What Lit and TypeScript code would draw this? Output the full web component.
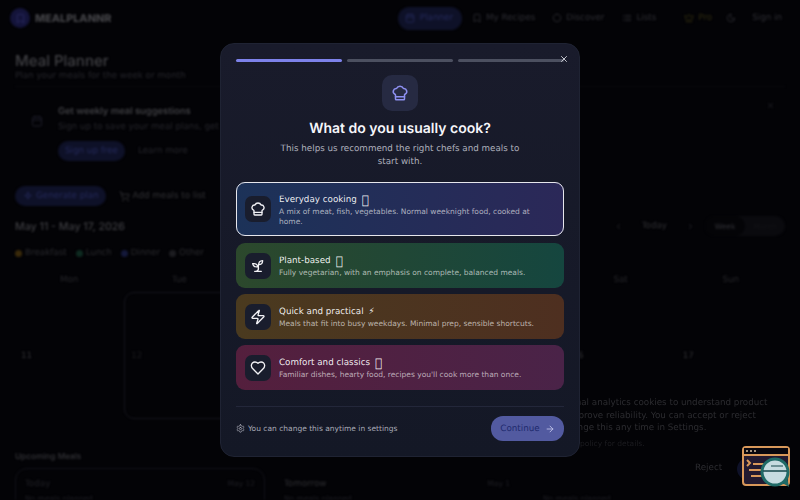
import { LitElement, html, css, svg } from "lit";
import { customElement } from "lit/decorators.js";

const P: Record<string, string[]> = {
  chef: ["M17 21a1 1 0 0 0 1-1v-5.35c0-.457.316-.844.727-1.041a4 4 0 0 0-2.134-7.589 5 5 0 0 0-9.186 0 4 4 0 0 0-2.134 7.588c.411.198.727.585.727 1.041V20a1 1 0 0 0 1 1Z", "M6 17h12"],
  sprout: ["M7 20h10", "M10 20c5.5-2.5.8-6.4 3-10", "M9.5 9.4c1.1.8 1.8 2.2 2.3 3.7-2 .4-3.5.4-4.8-.3-1.2-.6-2.3-1.9-3-4.2 2.8-.5 4.4 0 5.5.8z", "M14.1 6a7 7 0 0 0-1.1 4c1.9-.1 3.3-.6 4.3-1.4 1-1 1.6-2.3 1.7-4.6-2.7.1-4 1-4.9 2z"],
  zap: ["M4 14a1 1 0 0 1-.78-1.63l9.9-10.2a.5.5 0 0 1 .86.46l-1.92 6.02A1 1 0 0 0 13 10h7a1 1 0 0 1 .78 1.63l-9.9 10.2a.5.5 0 0 1-.86-.46l1.92-6.02A1 1 0 0 0 11 14z"],
  heart: ["M19 14c1.49-1.46 3-3.21 3-5.5A5.5 5.5 0 0 0 16.5 3c-1.76 0-3 .5-4.5 2-1.5-1.5-2.74-2-4.5-2A5.5 5.5 0 0 0 2 8.5c0 2.3 1.5 4.05 3 5.5l7 7Z"],
  x: ["M18 6 6 18", "m6 6 12 12"],
  arrow: ["M5 12h14", "m12 5 7 7-7 7"],
  cal: ["M8 2v4", "M16 2v4", "M3 6a2 2 0 0 1 2-2h14a2 2 0 0 1 2 2v14a2 2 0 0 1-2 2H5a2 2 0 0 1-2-2z", "M3 10h18"],
  book: ["m19 21-7-4-7 4V5a2 2 0 0 1 2-2h10a2 2 0 0 1 2 2v16z"],
  disc: ["M12 3a9 9 0 1 0 9 9 9 9 0 0 0-9-9z"],
  list: ["M8 6h13", "M8 12h13", "M8 18h13", "M3 6h1", "M3 12h1", "M3 18h1"],
  crown: ["M11.6 3.3a.5.5 0 0 1 .9 0l2.9 5.6a1 1 0 0 0 1.5.3l4.3-3.7a.5.5 0 0 1 .8.5l-2.8 10.2a1 1 0 0 1-1 .7H5.9a1 1 0 0 1-1-.7L2 5.9a.5.5 0 0 1 .8-.5l4.3 3.7a1 1 0 0 0 1.5-.3z", "M5 21h14"],
  moon: ["M12 3a6 6 0 0 0 9 9 9 9 0 1 1-9-9Z"],
  cart: ["M8 21a1 1 0 1 0 0-.01", "M19 21a1 1 0 1 0 0-.01", "M2 2h2.7l2.7 12.4a2 2 0 0 0 2 1.6h8.8a2 2 0 0 0 2-1.6L22 7H5.5"],
  spark: ["M12 3l2 6 6 2-6 2-2 6-2-6-6-2 6-2z"],
  left: ["m15 18-6-6 6-6"],
  right: ["m9 18 6-6-6-6"],
  cog: ["M12.22 2h-.44a2 2 0 0 0-2 2v.18a2 2 0 0 1-1 1.73l-.43.25a2 2 0 0 1-2 0l-.15-.08a2 2 0 0 0-2.73.73l-.22.38a2 2 0 0 0 .73 2.73l.15.1a2 2 0 0 1 1 1.72v.51a2 2 0 0 1-1 1.74l-.15.09a2 2 0 0 0-.73 2.73l.22.38a2 2 0 0 0 2.73.73l.15-.08a2 2 0 0 1 2 0l.43.25a2 2 0 0 1 1 1.73V20a2 2 0 0 0 2 2h.44a2 2 0 0 0 2-2v-.18a2 2 0 0 1 1-1.73l.43-.25a2 2 0 0 1 2 0l.15.08a2 2 0 0 0 2.73-.73l.22-.39a2 2 0 0 0-.73-2.73l-.15-.08a2 2 0 0 1-1-1.74v-.5a2 2 0 0 1 1-1.74l.15-.09a2 2 0 0 0 .73-2.73l-.22-.38a2 2 0 0 0-2.73-.73l-.15.08a2 2 0 0 1-2 0l-.43-.25a2 2 0 0 1-1-1.73V4a2 2 0 0 0-2-2z", "M12 9a3 3 0 1 0 0 6 3 3 0 0 0 0-6z"],
};

const icon = (name: string, size: number, color = "currentColor", sw = 2) => html`<svg width=${size} height=${size} viewBox="0 0 24 24" fill="none" stroke=${color} stroke-width=${sw} stroke-linecap="round" stroke-linejoin="round">${P[name].map((d) => svg`<path d=${d}></path>`)}</svg>`;

const OPTIONS = [
  { cls: "o1", ic: "chef", t: "Everyday cooking", e: "\uE000", big: true, d: "A mix of meat, fish, vegetables. Normal weeknight food, cooked at home." },
  { cls: "o2", ic: "sprout", t: "Plant-based", e: "\uE000", big: true, d: "Fully vegetarian, with an emphasis on complete, balanced meals." },
  { cls: "o3", ic: "zap", t: "Quick and practical", e: "⚡", big: false, d: "Meals that fit into busy weekdays. Minimal prep, sensible shortcuts." },
  { cls: "o4", ic: "heart", t: "Comfort and classics", e: "\uE000", big: true, d: "Familiar dishes, hearty food, recipes you'll cook more than once." },
];

const DAYS = ["Mon", "Tue", "Wed", "Thu", "Fri", "Sat", "Sun"];
const DATES = [11, 12, 13, 14, 15, 16, 17];

@customElement("app-root")
export class AppRoot extends LitElement {
  static styles = css`
    :host { display: block; position: relative; width: 800px; height: 500px; overflow: hidden; background: #030306; font-family: "DejaVu Sans", sans-serif; color: #2e2e32; text-rendering: geometricPrecision; }
    .page { height: 500px; overflow: hidden; filter: blur(1px); display: flex; flex-direction: column; }
    .nav { display: flex; align-items: center; height: 36px; padding: 0 18px 0 10px; flex: none; }
    .logo { width: 20px; height: 20px; border-radius: 50%; background: #14143a; display: flex; align-items: center; justify-content: center; color: #2a2a60; }
    .brand { margin-left: 5px; font: 800 10.8px "Inter", sans-serif; color: #444448; }
    .links { margin-left: auto; display: flex; align-items: center; font-size: 8.75px; color: #2e2e34; }
    .lk { display: flex; align-items: center; gap: 4px; }
    .planner { background: #0e1128; color: #252a5c; padding: 0 9px 0 7px; height: 23px; border-radius: 12px; margin-right: 10px; gap: 5px; }
    .m17 { margin-right: 17px; }
    .m18 { margin-right: 18px; }
    .m28 { margin-right: 28px; }
    .m14 { margin-right: 14px; }
    .m16 { margin-right: 16px; }
    .pro { color: #302c10; }
    .main { padding: 16px 15px 0; display: flex; flex-direction: column; }
    h1 { margin: 0; font: 500 15px/18px "Inter", sans-serif; color: #404044; }
    .subt { font-size: 8.75px; line-height: 13px; color: #26262c; margin-top: 0; }
    .promo { display: flex; gap: 15px; padding: 18px 16px 0 16px; margin-top: 3px; height: 100px; box-sizing: border-box; border-top: 1px solid #08080c; position: relative; }
    .promo .pi { margin-top: 7px; color: #1e1e2a; }
    .pt { font: 600 9.375px/14px "Inter", sans-serif; color: #404044; white-space: nowrap; }
    .pd { font-size: 8.75px; line-height: 13px; margin-top: 2px; color: #26262c; white-space: nowrap; }
    .pb { display: flex; align-items: center; gap: 13px; margin-top: 7px; font-size: 8.75px; color: #26262c; }
    .pill { background: #0e1128; color: #252a5c; border-radius: 10px; height: 20px; display: inline-flex; align-items: center; padding: 0 7px; gap: 4px; }
    .acts .pill { padding: 0 7px 0 8px; }
    .pclose { position: absolute; left: 751px; top: 8px; color: #28282e; }
    .acts { display: flex; align-items: center; gap: 13px; font-size: 8.75px; color: #323236; height: 20px; }
    .acts span { display: flex; align-items: center; gap: 3px; }
    .datebar { display: flex; align-items: center; height: 20px; margin-top: 10px; font: 500 10.625px "Inter", sans-serif; color: #3e3e42; }
    .dnav { margin-left: auto; display: flex; align-items: center; font: 8.75px "DejaVu Sans", sans-serif; color: #303034; }
    .dnav .today { margin: 0 19px; }
    .seg { display: flex; align-items: center; margin-left: 10px; width: 80px; border-radius: 10px; background: #0a0a0e; height: 20px; font-size: 7.5px; }
    .seg span { flex: 1; height: 100%; display: flex; align-items: center; justify-content: center; border-radius: 10px; }
    .seg .on { background: #040407; color: #34343a; }
    .seg .off { color: #121216; }
    .legend { display: flex; gap: 9px; margin-top: 11px; font-size: 8.75px; line-height: 12px; color: #2a2a2e; }
    .legend span { display: flex; align-items: center; gap: 3px; }
    .legend i { width: 7px; height: 7px; border-radius: 50%; }
    .br { background: #3a2a0a; }
    .lu { background: #0e2a20; }
    .di { background: #14183a; }
    .ot2 { background: #1c1c20; }
    .cal { display: grid; grid-template-columns: repeat(7, 1fr); margin: 0 -1px; }
    .dh { text-align: center; font-size: 8.75px; line-height: 12px; color: #26262a; padding: 15px 0 6px; }
    .cell { height: 127px; display: flex; align-items: center; padding-left: 7px; font-size: 8.75px; color: #303034; box-sizing: border-box; }
    .cell.today { border: 1px solid #16161e; border-radius: 10px; color: #1a1a1e; padding-left: 6px; }
    .up { font: 500 8.25px/12px "Inter", sans-serif; color: #36363a; margin-top: 31px; }
    .ups { display: flex; gap: 9px; margin-top: 6px; }
    .uc { width: 250px; flex: none; padding: 9px; box-sizing: border-box; border: 1px solid #12121a; border-radius: 12px; font-size: 7.5px; color: #1e1e24; line-height: 12px; height: 60px; }
    .uc.pl { border-color: transparent; }
    .uc .r { display: flex; justify-content: space-between; align-items: center; margin-bottom: 3px; }
    .uc .tm { font-size: 8.75px; color: #202026; }
    .uc.pl .tm { color: #303034; }
    .uc.pl .may { margin-right: 4px; }

    .cookie { position: absolute; left: 519px; top: 397px; width: 261px; font-size: 8.75px; line-height: 12.5px; color: #2c2c30; filter: blur(0.7px); white-space: nowrap; }
    .cookie .sm { font-size: 7.5px; color: #1c1c20; margin-top: 3px; line-height: 12px; }
    .cookie .cb { display: flex; align-items: center; margin-top: 8px; margin-left: 176px; gap: 15px; }
    .cookie .acc { width: 34px; height: 22px; border-radius: 11px; background: #0e1128; }

    .fab { position: absolute; left: 741px; top: 444px; }

    .modal { position: absolute; left: 220px; top: 43px; width: 360px; height: 414px; box-sizing: border-box; padding: 15px 15px 0; border: 1px solid #1f2333; border-radius: 14px; background: linear-gradient(180deg, #191b2b 0%, #141826 100%); display: flex; flex-direction: column; align-items: stretch; }
    .bars { display: flex; gap: 5px; height: 3px; }
    .bars i { flex: 1; border-radius: 2px; background: #4c5060; }
    .bars i.on { background: #7d82ea; }
    .close { position: absolute; right: 10px; top: 10px; color: #d2d4dc; display: flex; }
    .tile { align-self: center; width: 36px; height: 36px; border-radius: 10px; background: #262a42; margin-top: 13px; display: flex; align-items: center; justify-content: center; color: #8d8ff0; }
    h2 { margin: 8px 0 0; text-align: center; font: 600 14px/20px "Inter", sans-serif; color: #f6f6fa; }
    .sub { margin: 4px auto 0; width: 260px; text-align: center; font-size: 8.75px; line-height: 13px; color: #aeb0bc; }
    .opts { display: flex; flex-direction: column; gap: 6px; margin-top: 13px; }
    .opt { display: flex; align-items: center; gap: 8px; padding: 0 9px; border-radius: 9px; height: 45px; box-sizing: border-box; }
    .opt.o1 { height: 54px; background: linear-gradient(90deg, #1c3258, #2b2858); outline: 1.5px solid #e6e6ec; outline-offset: -1.5px; margin-bottom: 1px; }
    .o2 { background: linear-gradient(90deg, #2c482c, #15463f); }
    .o3 { background: linear-gradient(90deg, #4a3a1f, #4e2f20); }
    .o4 { background: linear-gradient(90deg, #541f3d, #4a2348); }
    .oi { width: 26px; height: 26px; flex: none; border-radius: 7px; background: #191d2d; display: flex; align-items: center; justify-content: center; color: #f2f2f6; }
    .tx { margin-top: 2px; }
    .ot { font-size: 8.75px; line-height: 13px; color: rgba(255, 255, 255, 0.92); display: flex; gap: 5px; }
    .ot .tofu { font-size: 12px; line-height: 13px; }
    .od { font-size: 7.5px; line-height: 10px; color: rgba(255, 255, 255, 0.62); }
    .foot { display: flex; align-items: center; margin-top: 16px; padding-top: 9px; border-top: 1px solid #23273a; font-size: 7.5px; color: #a8aab6; gap: 3px; }
    .cont { margin-left: auto; width: 73px; height: 25px; border-radius: 12px; background: #525aa0; color: #1f2a6e; font-size: 8.75px; display: flex; align-items: center; justify-content: center; gap: 5px; }
    .cont svg { color: #c4c8ee; }
  `;

  render() {
    return html`
      <div class="page">
        <div class="nav">
          <div class="logo">${icon("book", 11)}</div>
          <div class="brand">MEALPLANNR</div>
          <div class="links">
            <div class="lk planner">${icon("cal", 10)}<span>Planner</span></div>
            <div class="lk m17">${icon("book", 10)}<span>My Recipes</span></div>
            <div class="lk m18">${icon("disc", 10)}<span>Discover</span></div>
            <div class="lk m28">${icon("list", 10)}<span>Lists</span></div>
            <div class="lk m14 pro">${icon("crown", 10)}<span>Pro</span></div>
            <div class="lk m16">${icon("moon", 10)}</div>
            <div class="lk"><span>Sign in</span></div>
          </div>
        </div>
        <div class="main">
          <h1>Meal Planner</h1>
          <div class="subt">Plan your meals for the week or month</div>
          <div class="promo">
            <div class="pi">${icon("cal", 12)}</div>
            <div>
              <div class="pt">Get weekly meal suggestions</div>
              <div class="pd">Sign up to save your meal plans, get personalized suggestions</div>
              <div class="pb"><span class="pill">Sign up free</span><span>Learn more</span></div>
            </div>
            <div class="pclose">${icon("x", 9)}</div>
          </div>
          <div class="acts">
            <span class="pill">${icon("spark", 10)}Generate plan</span>
            <span>${icon("cart", 11)}Add meals to list</span>
          </div>
          <div class="datebar">
            <span>May 11 - May 17, 2026</span>
            <div class="dnav">
              ${icon("left", 9)}<span class="today">Today</span>${icon("right", 9)}
              <div class="seg"><span class="on">Week</span><span class="off">Month</span></div>
            </div>
          </div>
          <div class="legend">
            <span><i class="br"></i>Breakfast</span>
            <span><i class="lu"></i>Lunch</span>
            <span><i class="di"></i>Dinner</span>
            <span><i class="ot2"></i>Other</span>
          </div>
          <div class="cal">
            ${DAYS.map((d) => html`<div class="dh">${d}</div>`)}
            ${DATES.map((d) => html`<div class="cell ${d === 12 ? "today" : ""}">${d}</div>`)}
          </div>
          <div class="up">Upcoming Meals</div>
          <div class="ups">
            <div class="uc"><div class="r"><span class="tm">Today</span><span>May 12</span></div>No meals planned</div>
            <div class="uc pl"><div class="r"><span class="tm">Tomorrow</span><span class="may">May 1</span></div>No meals planned</div>
            <div class="uc pl"><div class="r"><span class="tm">&nbsp;</span></div>No meals planned</div>
          </div>
        </div>
      </div>

      <div class="cookie">
        We use optional analytics cookies to understand product<br />
        usage and improve reliability. You can accept or reject<br />
        now, and change this any time in Settings.
        <div class="sm">See our privacy policy for details.</div>
        <div class="cb"><span>Reject</span><span class="acc"></span></div>
      </div>

      <div class="modal">
        <div class="bars"><i class="on"></i><i></i><i></i></div>
        <div class="close">${icon("x", 10, "currentColor", 2.2)}</div>
        <div class="tile">${icon("chef", 18)}</div>
        <h2>What do you usually cook?</h2>
        <div class="sub">This helps us recommend the right chefs and meals to start with.</div>
        <div class="opts">
          ${OPTIONS.map((o) => html`
            <div class="opt ${o.cls}">
              <div class="oi">${icon(o.ic, 16)}</div>
              <div class="tx">
                <div class="ot"><span>${o.t}</span><span class=${o.big ? "tofu" : ""}>${o.e}</span></div>
                <div class="od">${o.d}</div>
              </div>
            </div>`)}
        </div>
        <div class="foot">
          ${icon("cog", 9)}<span>You can change this anytime in settings</span>
          <div class="cont"><span>Continue</span>${icon("arrow", 10)}</div>
        </div>
      </div>

      <svg class="fab" width="52" height="46" viewBox="0 0 52 46">
        <rect x="2" y="3" width="46" height="38" rx="3" fill="#221a30" stroke="#d8985a" stroke-width="2"></rect>
        <rect x="3" y="4" width="44" height="6" fill="#08070e"></rect>
        <path d="M2 11h46" stroke="#d8985a" stroke-width="2"></path>
        <circle cx="6" cy="7" r="1" fill="#d8c0a0"></circle><circle cx="10" cy="7" r="1" fill="#d8c0a0"></circle><circle cx="14" cy="7" r="1" fill="#d8c0a0"></circle>
        <path d="M6 16l3 3-3 3M12 20h14M8 26h20M10 32h16" stroke="#d8985a" stroke-width="2" fill="none"></path>
        <path d="M40 38l8 5-2-10z" fill="#1f6a66"></path>
        <circle cx="34" cy="28" r="13" fill="#c6dbe0" stroke="#1f6a66" stroke-width="3"></circle>
        <path d="M22 27h24" stroke="#14464a" stroke-width="1.5"></path>
        <path d="M30 22h12" stroke="#14464a" stroke-width="1"></path>
      </svg>
    `;
  }
}
